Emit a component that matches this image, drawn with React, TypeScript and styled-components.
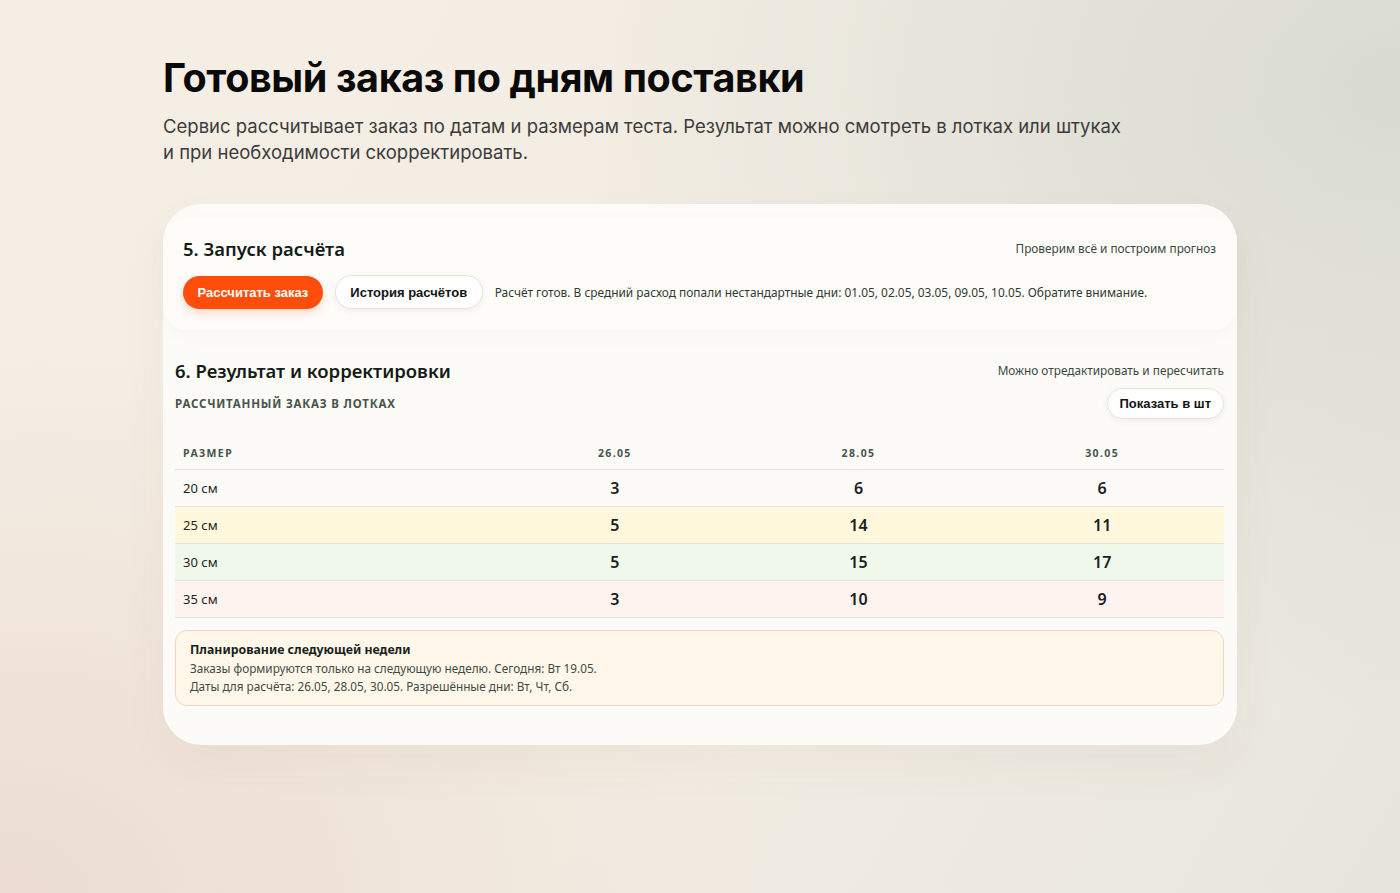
import React from "react";
import styled, { createGlobalStyle } from "styled-components";

type Row = {
  size: string;
  values: number[];
  tone: "plain" | "yellow" | "green" | "pink";
};

const dates = ["26.05", "28.05", "30.05"];

const rows: Row[] = [
  { size: "20 см", values: [3, 6, 6], tone: "plain" },
  { size: "25 см", values: [5, 14, 11], tone: "yellow" },
  { size: "30 см", values: [5, 15, 17], tone: "green" },
  { size: "35 см", values: [3, 10, 9], tone: "pink" },
];

const toneColors: Record<Row["tone"], string> = {
  plain: "transparent",
  yellow: "#fff8dc",
  green: "#f0f8ec",
  pink: "#fff3f0",
};

const App: React.FC = () => {
  return (
    <>
      <GlobalStyle />
      <Page>
        <Header>
          <Title>Готовый заказ по дням поставки</Title>
          <Lead>
            Сервис рассчитывает заказ по датам и размерам теста. Результат можно
            смотреть в лотках или штуках и при необходимости скорректировать.
          </Lead>
        </Header>

        <Card>
          <LaunchSection>
            <SectionHead>
              <SectionTitle>5. Запуск расчёта</SectionTitle>
              <Hint>Проверим всё и построим прогноз</Hint>
            </SectionHead>
            <Actions>
              <PrimaryButton>Рассчитать заказ</PrimaryButton>
              <GhostButton>История расчётов</GhostButton>
              <Status>
                Расчёт готов. В средний расход попали нестандартные дни: 01.05,
                02.05, 03.05, 09.05, 10.05. Обратите внимание.
              </Status>
            </Actions>
          </LaunchSection>

          <ResultSection>
            <SectionHead>
              <SectionTitle>6. Результат и корректировки</SectionTitle>
              <Hint>Можно отредактировать и пересчитать</Hint>
            </SectionHead>
            <SubHead>
              <Caption>Рассчитанный заказ в лотках</Caption>
              <GhostButton $small>Показать в шт</GhostButton>
            </SubHead>

            <Table>
              <thead>
                <tr>
                  <HeadCell>Размер</HeadCell>
                  {dates.map((d) => (
                    <HeadCell key={d} $center>
                      {d}
                    </HeadCell>
                  ))}
                </tr>
              </thead>
              <tbody>
                {rows.map((row) => (
                  <BodyRow key={row.size} $tone={row.tone}>
                    <SizeCell>{row.size}</SizeCell>
                    {row.values.map((v, i) => (
                      <ValueCell key={i}>{v}</ValueCell>
                    ))}
                  </BodyRow>
                ))}
              </tbody>
            </Table>

            <Notice>
              <NoticeTitle>Планирование следующей недели</NoticeTitle>
              <NoticeLine>
                Заказы формируются только на следующую неделю. Сегодня: Вт 19.05.
              </NoticeLine>
              <NoticeLine>
                Даты для расчёта: 26.05, 28.05, 30.05. Разрешённые дни: Вт, Чт, Сб.
              </NoticeLine>
            </Notice>
          </ResultSection>
        </Card>
      </Page>
    </>
  );
};

export default App;

const GlobalStyle = createGlobalStyle`
  * {
    box-sizing: border-box;
  }

  html,
  body {
    margin: 0;
    padding: 0;
  }

  body {
    min-height: 100vh;
    font-family: "Noto Sans", "DejaVu Sans", sans-serif;
    color: #1d2520;
    background:
      radial-gradient(ellipse 60% 70% at 100% 10%, #d9dbd2 0%, rgba(217, 219, 210, 0) 100%),
      radial-gradient(ellipse 55% 60% at 0% 100%, #ecdcd2 0%, rgba(236, 220, 210, 0) 100%),
      linear-gradient(120deg, #f5eee5 0%, #f3ede3 55%, #e7e5dd 100%);
    background-attachment: fixed;
  }
`;

const Page = styled.main`
  width: 1074px;
  margin: 0 auto;
  padding: 55px 0 60px;
  display: flex;
  flex-direction: column;
  gap: 39px;
`;

const Header = styled.header`
  display: flex;
  flex-direction: column;
  gap: 12px;
`;

const Title = styled.h1`
  margin: 0;
  font-family: Inter, "Noto Sans", sans-serif;
  font-size: 39.5px;
  line-height: 46px;
  font-weight: 700;
  letter-spacing: -0.01em;
  color: #0a0a0a;
`;

const Lead = styled.p`
  margin: 0;
  max-width: 966px;
  font-family: Inter, "Noto Sans", sans-serif;
  font-size: 18.5px;
  line-height: 26px;
  color: #3b3b3b;
`;

const Card = styled.section`
  background: #fcfbf7;
  border-radius: 38px;
  padding: 14px 0 39px;
  display: flex;
  flex-direction: column;
  gap: 14px;
  box-shadow: 0 20px 50px rgba(90, 70, 50, 0.04);
`;

const LaunchSection = styled.div`
  padding: 17px 21px 21px 20px;
  border-radius: 24px;
  background: #fdfcf9;
  box-shadow: 0 6px 20px rgba(80, 60, 40, 0.025);
  display: flex;
  flex-direction: column;
  gap: 14px;
`;

const ResultSection = styled.div`
  padding: 13px 13px 0 12px;
  display: flex;
  flex-direction: column;
`;

const SectionHead = styled.div`
  display: flex;
  align-items: center;
  justify-content: space-between;
  height: 26px;
`;

const SectionTitle = styled.h2`
  margin: 0;
  font-size: 18.5px;
  font-weight: 600;
  color: #141c17;
`;

const Hint = styled.span`
  font-size: 11.8px;
  color: #3a4840;
`;

const Actions = styled.div`
  display: flex;
  align-items: center;
  gap: 12px;
`;

const PrimaryButton = styled.button`
  height: 33px;
  padding: 0 14.5px;
  border: none;
  border-radius: 999px;
  background: #ff4d0b;
  color: #fff;
  font-family: "Liberation Sans", Arial, sans-serif;
  font-size: 13px;
  font-weight: 700;
  box-shadow: 0 4px 10px rgba(255, 77, 11, 0.2);
  cursor: pointer;
`;

const GhostButton = styled.button<{ $small?: boolean }>`
  height: ${(p) => (p.$small ? "31px" : "34px")};
  padding: 0 ${(p) => (p.$small ? "12px" : "14.5px")};
  border: 1px solid #e7e4dc;
  border-radius: 999px;
  background: #fff;
  color: #141414;
  font-family: "Liberation Sans", Arial, sans-serif;
  font-size: 13px;
  font-weight: 700;
  box-shadow: 0 2px 6px rgba(60, 50, 30, 0.07);
  cursor: pointer;
`;

const Status = styled.span`
  font-size: 11.9px;
  color: #2f3a33;
`;

const SubHead = styled.div`
  display: flex;
  align-items: center;
  justify-content: space-between;
  margin-top: 5px;
`;

const Caption = styled.span`
  font-size: 11.5px;
  font-weight: 700;
  letter-spacing: 0.07em;
  text-transform: uppercase;
  color: #46544b;
`;

const Table = styled.table`
  width: 100%;
  margin-top: 18px;
  border-collapse: collapse;
  table-layout: fixed;
`;

const HeadCell = styled.th<{ $center?: boolean }>`
  height: 32px;
  padding: 0 8px;
  text-align: ${(p) => (p.$center ? "center" : "left")};
  font-size: 10.5px;
  font-weight: 700;
  letter-spacing: 0.13em;
  text-transform: uppercase;
  color: #46544b;
  border-bottom: 1px solid #e6e3dc;

  &:first-child {
    width: 318px;
  }
`;

const BodyRow = styled.tr<{ $tone: Row["tone"] }>`
  background: ${(p) => toneColors[p.$tone]};

  td {
    height: 37px;
    border-bottom: 1px solid #e6e3dc;
  }
`;

const SizeCell = styled.td`
  padding: 0 8px;
  font-size: 13px;
  color: #1e2620;
`;

const ValueCell = styled.td`
  text-align: center;
  font-size: 16px;
  font-weight: 600;
  color: #1a211c;
`;

const Notice = styled.div`
  margin-top: 12px;
  padding: 10px 14px 10px;
  border: 1px solid #f4d6c0;
  border-radius: 12px;
  background: #fff8ea;
  display: flex;
  flex-direction: column;
`;

const NoticeTitle = styled.div`
  font-size: 12.3px;
  line-height: 18px;
  font-weight: 700;
  color: #1a1f1b;
`;

const NoticeLine = styled.div`
  font-size: 11.75px;
  line-height: 18px;
  color: #434a44;
`;
